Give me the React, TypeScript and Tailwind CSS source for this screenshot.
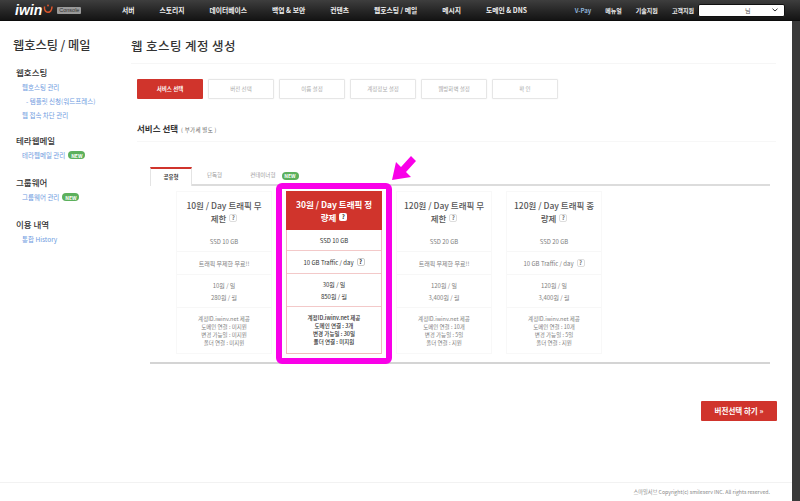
import React from "react";

const Font = '[font-family:"Noto_Sans_CJK_KR","Noto_Sans",sans-serif]';

function NewBadge() {
  return (
    <span className="inline-flex h-[8px] w-[17px] items-center justify-center rounded-full bg-[#5cb05c] text-[5px] font-bold leading-none text-white">
      NEW
    </span>
  );
}

function Help({ active = false, red = false }: { active?: boolean; red?: boolean }) {
  return (
    <span
      className={
        "ml-[3px] inline-flex h-[8px] w-[8px] items-center justify-center rounded-[2px] align-middle text-[6px] font-bold leading-none " +
        (red
          ? "bg-white text-[#333]"
          : active
            ? "border border-[#ccc] bg-white text-[#333]"
            : "border border-[#ddd] bg-white text-[#777]")
      }
    >
      ?
    </span>
  );
}

type Plan = {
  title: [string, string];
  ssd: string;
  traffic: string;
  help: boolean;
  day: string;
  month: string;
  info: string[];
};

const plans: Plan[] = [
  { title: ["10원 / Day 트래픽 무", "제한"], ssd: "SSD 10 GB", traffic: "트래픽 무제한 무료!!", help: false, day: "10원 / 일", month: "280원 / 월", info: ["계정ID.iwinv.net 제공", "도메인 연결 : 미지원", "변경 가능일 : 미지원", "폴더 연결 : 미지원"] },
  { title: ["30원 / Day 트래픽 정", "량제"], ssd: "SSD 10 GB", traffic: "10 GB Traffic / day", help: true, day: "30원 / 일", month: "850원 / 월", info: ["계정ID.iwinv.net 제공", "도메인 연결 : 3개", "변경 가능일 : 30일", "폴더 연결 : 미지원"] },
  { title: ["120원 / Day 트래픽 무", "제한"], ssd: "SSD 20 GB", traffic: "트래픽 무제한 무료!!", help: false, day: "120원 / 일", month: "3,400원 / 월", info: ["계정ID.iwinv.net 제공", "도메인 연결 : 10개", "변경 가능일 : 5일", "폴더 연결 : 지원"] },
  { title: ["120원 / Day 트래픽 종", "량제"], ssd: "SSD 20 GB", traffic: "10 GB Traffic / day", help: true, day: "120원 / 일", month: "3,400원 / 월", info: ["계정ID.iwinv.net 제공", "도메인 연결 : 10개", "변경 가능일 : 5일", "폴더 연결 : 지원"] },
];

function PlanCard({ plan, active }: { plan: Plan; active: boolean }) {
  const line = active ? "border-[#f3c9c9]" : "border-[#f7f7f7]";
  const text = active ? "text-[#333]" : "text-[#808080]";
  return (
    <div className={"flex h-[163px] w-[96px] flex-col border " + (active ? "border-[#f0bcbc] " : "border-[#f8f8f8] ") + text}>
      <div
        className={
          "flex h-[39px] shrink-0 flex-col items-center justify-center whitespace-nowrap text-center text-[8.5px] leading-[13px] " +
          (active ? "-m-px mb-0 bg-[#d0342c] font-bold text-white" : "font-medium text-[#555]")
        }
      >
        <span>{plan.title[0]}</span>
        <span className="flex items-center">
          {plan.title[1]}
          <Help red={active} />
        </span>
      </div>
      <div className={"flex h-[21px] shrink-0 items-center justify-center border-b text-[6px] " + line}>{plan.ssd}</div>
      <div className={"flex h-[23px] shrink-0 items-center justify-center border-b text-[6px] " + line}>
        {plan.traffic}
        {plan.help && <Help active={active} />}
      </div>
      <div className={"flex h-[33px] shrink-0 flex-col items-center justify-center gap-[5px] border-b text-[6px] leading-[7px] " + line}>
        <span>{plan.day}</span>
        <span>{plan.month}</span>
      </div>
      <div className={"flex flex-1 flex-col items-center justify-center text-[5.5px] leading-[8px] " + (active ? "font-medium" : "")}>
        {plan.info.map((t) => (
          <span key={t}>{t}</span>
        ))}
      </div>
    </div>
  );
}

const nav = ["서버", "스토리지", "데이터베이스", "백업 & 보안", "컨텐츠", "웹호스팅 / 메일", "메시지", "도메인 & DNS"];
const steps = ["서비스 선택", "버전 선택", "이름 설정", "계정정보 설정", "웹방화벽 설정", "확 인"];

function SideGroup({ title, className, children }: { title: string; className: string; children: React.ReactNode }) {
  return (
    <div className={className}>
      <div className="h-[14px] text-[8.5px] font-medium leading-[14px] text-[#333]">{title}</div>
      <div className="mt-[1px] flex flex-col pl-[6px] text-[6.5px] leading-[14px] text-[#6e9ae0]">{children}</div>
    </div>
  );
}

export default function App() {
  return (
    <div className={"flex h-[501px] w-[800px] flex-col overflow-hidden bg-white " + Font}>
      <header className="flex h-[21px] shrink-0 items-center border-b border-[#0c0c0c] bg-gradient-to-b from-[#3e3e3e] to-[#141414] pr-[15px]">
        <div className="flex w-[122px] shrink-0 items-center pl-[15px]">
          <span className="text-[14px] font-bold italic leading-none text-white [font-family:'Liberation_Sans',sans-serif]">iwin</span>
          <svg width="10" height="11" viewBox="0 0 10 11" className="-mt-[1px] ml-[1px]">
            <path d="M1.5 2.5 C0.5 10 9 10.5 9 2.5" fill="none" stroke="#e0562b" strokeWidth="1.5" />
            <circle cx="5" cy="1.5" r="0.9" fill="#e0562b" />
          </svg>
          <span className="ml-[4px] rounded-[1px] bg-[#9a9a9a] px-[2px] text-[5.5px] leading-[7px] text-[#333] [font-family:'Liberation_Sans',sans-serif]">Console</span>
        </div>
        <nav className="flex gap-[25px] whitespace-nowrap text-[6.8px] font-bold text-[#f0f0f0]">
          {nav.map((n) => (
            <span key={n}>{n}</span>
          ))}
        </nav>
        <div className="ml-auto flex gap-[14px] whitespace-nowrap text-[6px] font-bold text-[#eee]">
          <span className="text-[#8fb4d8]">V-Pay</span>
          <span>메뉴얼</span>
          <span>기술지원</span>
          <span>고객지원</span>
        </div>
        <div className="ml-[4px] flex h-[13px] w-[87px] items-center rounded-[2px] border border-[#111] bg-white pl-[46px] pr-[6px] text-[6px] text-[#555]">
          <span className="flex-1">님</span>
          <svg width="6" height="4" viewBox="0 0 6 4">
            <path d="M0.5 0.7 L3 3 L5.5 0.7" fill="none" stroke="#333" strokeWidth="1" />
          </svg>
        </div>
      </header>

      <div className="flex min-h-0 flex-1">
        <div className="flex min-w-0 flex-1 flex-col">
          <div className="flex min-h-0 flex-1">
            <aside className="w-[131px] shrink-0 pl-[13px]">
              <h2 className="mt-[14px] h-[20px] whitespace-nowrap text-[12.2px] font-medium leading-[20px] text-[#333]">웹호스팅 / 메일</h2>
              <SideGroup title="웹호스팅" className="mt-[10px] pl-[3px]">
                <span>웹호스팅 관리</span>
                <span className="pl-[4px]">- 템플릿 신청(워드프레스)</span>
                <span>웹 접속 차단 관리</span>
              </SideGroup>
              <SideGroup title="테라웹메일" className="mt-[11px] pl-[3px]">
                <span className="flex items-center gap-[3px]">테라웹메일 관리 <NewBadge /></span>
              </SideGroup>
              <SideGroup title="그룹웨어" className="mt-[13px] pl-[3px]">
                <span className="flex items-center gap-[3px]">그룹웨어 관리 <NewBadge /></span>
              </SideGroup>
              <SideGroup title="이용 내역" className="mt-[13px] pl-[3px]">
                <span>통합 History</span>
              </SideGroup>
            </aside>

            <main className="relative w-[646px] shrink-0 pl-[6px]">
              <div className="-ml-[6px] mr-[1px] flex h-[43px] items-end border-b border-[#f6f6f6] pb-[7px]">
                <h1 className="text-[12.5px] font-medium leading-[20px] tracking-[0.4px] text-[#333]">웹 호스팅 계정 생성</h1>
              </div>

              <div className="mt-[15px] flex gap-[5px]">
                {steps.map((s, i) => (
                  <div
                    key={s}
                    className={
                      "flex h-[20px] w-[66px] items-center justify-center rounded-[1px] text-[5.5px] " +
                      (i === 0
                        ? "bg-[#d0342c] font-bold text-white"
                        : "border border-[#e6e6e6] text-[#aaa] shadow-[0_0_1px_#ddd]")
                    }
                  >
                    {s}
                  </div>
                ))}
              </div>

              <div className="mr-[1px] mt-[23px] flex h-[20px] items-baseline border-b border-[#f7f7f7] pb-[9px] leading-[12px]">
                <span className="text-[8.5px] font-bold leading-[12px] text-[#333]">서비스 선택</span>
                <span className="ml-[3px] text-[5.5px] tracking-[0.3px] text-[#666]">( 부가세 별도 )</span>
              </div>

              <div className="ml-[13px] mt-[25px] w-[620px]">
                <div className="flex h-[19px] items-stretch border-b-2 border-[#dcdcdc]">
                  <div className="-mb-[2px] flex w-[42px] items-center justify-center border-x border-t-2 border-x-[#e4e4e4] border-t-[#d0342c] bg-white text-[5.5px] font-bold text-[#333]">공유형</div>
                  <div className="ml-[15px] flex items-center text-[5.5px] text-[#999]">단독형</div>
                  <div className="ml-[28px] flex items-center gap-[6px] text-[5.5px] text-[#999]">컨테이너형 <NewBadge /></div>
                </div>
                <div className="flex h-[178px] gap-[14px] border-b-2 border-[#d4d4d4] pl-[26px] pt-[5px]">
                  {plans.map((p, i) => (
                    <PlanCard key={p.title[0]} plan={p} active={i === 1} />
                  ))}
                </div>
              </div>

              {/* annotation drawn over the page */}
              <div className="pointer-events-none absolute left-[145px] top-[162px] h-[181px] w-[116px] rounded-[6px] border-[6px] border-[#f900e8]" />
              <svg className="pointer-events-none absolute left-[261px] top-[134px]" width="30" height="30" viewBox="392 155 30 30">
                <polygon points="392,180 396,162 401,167 411,156 416,161 406,172 411,177" fill="#f900e8" />
              </svg>

              <div className="mt-[37px] flex justify-end">
                <button className="flex h-[20px] w-[76px] items-center justify-center rounded-[1px] bg-[#d0342c] text-[7.5px] font-bold text-white">
                  버전선택 하기 »
                </button>
              </div>
            </main>
          </div>
          <footer className="flex h-[19px] shrink-0 items-center justify-end border-t border-[#f2f2f2] pr-[22px] text-[5.2px] text-[#888]">
            스마일서브 Copyright(c) smileserv INC. All rights reserved.
          </footer>
        </div>
        <div className="w-[8px] shrink-0 bg-[#3a3a3a]" />
      </div>
    </div>
  );
}
